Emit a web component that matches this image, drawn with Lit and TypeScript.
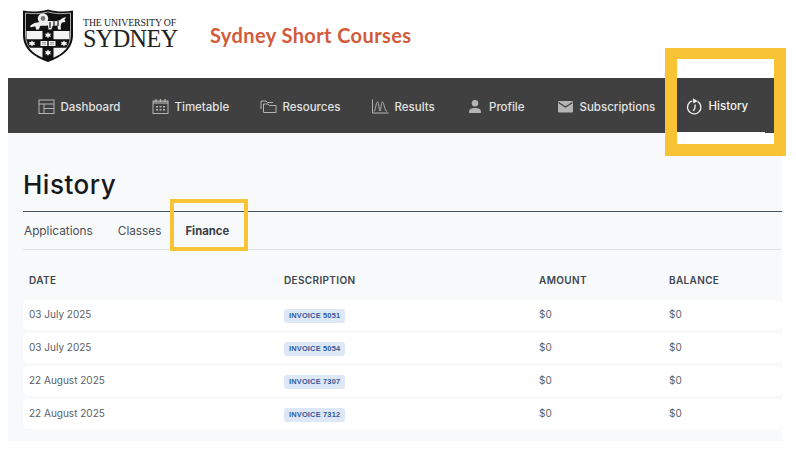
import { LitElement, html, css, svg } from 'lit';
import { customElement } from 'lit/decorators.js';

const NAV_ICONS: Record<string, unknown> = {
  dashboard: svg`<rect x="1" y="2" width="15" height="13.500" fill="none" stroke="currentColor" stroke-width="1"/><path d="M1 6h15M6 6v9.500M6 10.500h10" fill="none" stroke="currentColor" stroke-width="1"/>`,
  timetable: svg`<rect x="1" y="3" width="15" height="12.500" fill="none" stroke="currentColor" stroke-width="1"/><path d="M1 3h15v3H1z" fill="currentColor" opacity=".55"/><path d="M4 1v3M8.500 1v3M13 1v3" stroke="currentColor" stroke-width="1.300"/><path d="M4 8h2v1.500H4zM7.500 8h2v1.500h-2zM11 8h2v1.500h-2zM4 11h2v1.500H4zM7.500 11h2v1.500h-2zM11 11h2v1.500h-2z" fill="currentColor"/>`,
  resources: svg`<path d="M1 11V3h5l1.500 1.500H13" fill="none" stroke="currentColor" stroke-width="1"/><path d="M3.500 14.500V6h4.500l1.500 1.500h6.500v7z" fill="none" stroke="currentColor" stroke-width="1"/>`,
  results: svg`<path d="M.5 1.500v13.500h16" fill="none" stroke="currentColor" stroke-width="1"/><path d="M2 13.500C3.500 13 4 4 5.500 4S7 13 8 13 9 4 10.500 4s2 9 4.500 9.500" fill="none" stroke="currentColor" stroke-width="1"/>`,
  profile: svg`<circle cx="8.500" cy="5" r="3" fill="currentColor"/><path d="M3 14v-1.500c0-2 2.500-3 5.500-3s5.500 1 5.500 3V14z" fill="currentColor"/>`,
  subscriptions: svg`<rect x="1" y="3" width="15" height="11.500" rx="1" fill="currentColor"/><path d="M1.500 4.500l7 4.500 7-4.500" fill="none" stroke="#404040" stroke-width="1.200"/>`,
  history: svg`<path d="M6.300 2.800A6.700 6.700 0 1 0 11.500 3.400" fill="none" stroke="currentColor" stroke-width="1.300"/><path d="M7 .2l4.600 2.900-4.200 2.300z" fill="currentColor"/><path d="M9.300 6.500l-.6 4.200-1.500 2.200" fill="none" stroke="currentColor" stroke-width="1.300"/>`,
};

const NAV = [
  { id: 'dashboard', label: 'Dashboard' },
  { id: 'timetable', label: 'Timetable' },
  { id: 'resources', label: 'Resources' },
  { id: 'results', label: 'Results' },
  { id: 'profile', label: 'Profile' },
  { id: 'subscriptions', label: 'Subscriptions' },
  { id: 'history', label: 'History', active: true },
];

const ROWS = [
  { date: '03 July 2025', invoice: 'INVOICE 5051' },
  { date: '03 July 2025', invoice: 'INVOICE 5054' },
  { date: '22 August 2025', invoice: 'INVOICE 7307' },
  { date: '22 August 2025', invoice: 'INVOICE 7312' },
];

@customElement('app-root')
export class AppRoot extends LitElement {
  static styles = css`
    :host {
      display: block;
      position: relative;
      height: 475px;
      overflow: hidden;
      background: #fff;
      font-family: 'Inter', 'Open Sans', sans-serif;
    }

    .header {
      display: flex;
      align-items: flex-start;
      height: 78px;
      padding-left: 23px;
      box-sizing: border-box;
    }
    .shield { width: 50px; height: 53px; flex: none; margin-top: 9px; }
    .wordmark {
      display: flex;
      flex-direction: column;
      width: 96px;
      margin-left: 10px;
      margin-top: 17px;
      color: #222;
      font-family: 'Liberation Serif', serif;
    }
    .wordmark .small { font-size: 9.800px; line-height: 11px; white-space: nowrap; letter-spacing: -.1px; }
    .wordmark .big { font-size: 24.200px; line-height: 22px; letter-spacing: -.6px; }
    .site-title {
      margin-left: 31px;
      margin-top: 23px;
      color: #d25b3c;
      font-family: 'Lato', sans-serif;
      font-weight: 700;
      font-size: 20px;
      line-height: 24px;
      letter-spacing: .4px;
    }

    .nav {
      display: grid;
      grid-template-columns: 114px 108px 112px 97px 88px 119px 89px;
      height: 55px;
      margin: 0 14px 0 8px;
      padding-left: 30px;
      background: #404040;
      color: #e2e2e2;
      font-size: 11.500px;
      font-weight: 500;
    }
    .nav-item {
      display: flex;
      align-items: center;
      gap: 5.500px;
      box-sizing: border-box;
      padding-top: 2px;
      white-space: nowrap;
    }
    .nav-item svg { width: 17px; height: 17px; flex: none; color: #b4b4b4; }
    .nav-item.profile svg { width: 12px; height: 15px; margin-right: 2.500px; }
    .nav-item.active { padding-left: 10px; color: #f4f4f4; border-bottom: 1.500px solid #fff; }
    .nav-item.active svg { color: #f4f4f4; }

    .panel {
      height: 308px;
      margin: 0 14px 0 8px;
      padding-left: 15px;
      background: #f8f9fb;
    }
    h1 {
      margin: 0;
      padding-top: 37px;
      height: 41px;
      color: #16181c;
      font-size: 26px;
      line-height: 30px;
      font-weight: 500;
      letter-spacing: .5px;
    }
    .tabs {
      display: flex;
      align-items: center;
      height: 37px;
      border-top: 1px solid #46525e;
      border-bottom: 1px solid #dfe2e6;
      font-size: 11.800px;
      color: #4a4f57;
    }
    .tab { margin-left: 1px; margin-right: 24px; }
    .tab.active { margin-left: 0; font-size: 11.300px; font-weight: 700; color: #3a3f46; }

    .cols {
      display: grid;
      grid-template-columns: 255px 255px 130px 1fr;
      padding-left: 6px;
    }
    .thead {
      height: 50px;
      padding-top: 10px;
      box-sizing: border-box;
      align-items: center;
      color: #3c4650;
      font-size: 10px;
      font-weight: 600;
      letter-spacing: .35px;
    }
    .rows { display: flex; flex-direction: column; gap: 3px; }
    .row {
      height: 30px;
      align-items: center;
      background: #fff;
      border-radius: 5px;
      color: #5a5f66;
      font-size: 10px;
      padding-bottom: 3px;
      box-sizing: border-box;
    }
    .badge {
      display: inline-block;
      position: relative;
      top: 2px;
      padding: 0 5px;
      height: 14px;
      line-height: 14px;
      border-radius: 3px;
      background: #dde7f5;
      color: #33599a;
      font-family: 'Liberation Sans', sans-serif;
      font-size: 7.400px;
      font-weight: 700;
      letter-spacing: .2px;
    }

    .mark { position: absolute; box-sizing: border-box; border-style: solid; border-color: #f8c435; }
    .mark-nav { left: 665px; top: 48px; width: 121px; height: 108px; border-width: 11px 12px 12px 12px; }
    .mark-nav::after {
      content: '';
      position: absolute;
      left: 0;
      right: 0;
      bottom: 0;
      height: 11px;
      background: #fff;
    }
    .mark-tab { left: 170px; top: 199px; width: 78px; height: 52px; border-width: 4px; }
  `;

  private renderShield() {
    return html`<svg class="shield" viewBox="0 0 50 53">
      <path d="M0 1.500C8 3 16 3 25 .5c9 2.500 17 2.500 25 1V26c0 14-11 22-25 27C11 48 0 40 0 26z" fill="#111"/>
      <path d="M2.500 4c7 1 15 1 22.500-1 7.500 2 15.500 2 22.500 1v22c0 12.500-9.500 20-22.500 24.500C12 46 2.500 38.500 2.500 26z" fill="none" stroke="#eee" stroke-width=".7"/>
      <path d="M3.500 22h43v8.500H3.900c-.2-1-.4-2-.4-4z" fill="#f4f4f4"/>
      <path d="M6 38.500h38c-4 5.500-10 9-19 11.500C16 47.500 10 44 6 38.500z" fill="#f4f4f4"/>
      <path d="M19.500 21h11v30h-11z" fill="#111"/>
      <path d="M3.700 30.500h42.600c-.6 3-1.500 5.500-2.800 8h-37c-1.300-2.500-2.200-5-2.800-8z" fill="#111"/>
      <!-- lion -->
      <path d="M7 17c3-3 6-3.500 10-4l8-1c4 0 8 .5 11-.5 2-.7 5-4 7-3l-1.500 2 1 2.500-3.500.5c-2 2.500-1 5-1 7h-3l-.5-4-5 .5-1 3.500h-3l-.5-4c-3 .5-5 0-8 .5l-1 3.500h-3l-.5-3c-2 0-4 1-5 .5z" fill="#eee"/>
      <circle cx="20" cy="9.500" r="5.200" fill="#eee"/>
      <circle cx="20" cy="9.500" r="2.400" fill="#777"/>
      <path d="M27 13v6M31 12.500v6M35 12v5" stroke="#111" stroke-width="1.200"/>
      <!-- stars -->
      <path d="M25 23l1 1.800 2-.3-.9 1.700.9 1.700-2-.3-1 1.800-1-1.800-2 .3.900-1.700-.9-1.700 2 .3z" fill="#f4f4f4"/>
      <path d="M25 40.500l1 1.800 2-.3-.9 1.700.9 1.700-2-.3-1 1.800-1-1.800-2 .3.900-1.700-.9-1.700 2 .3z" fill="#f4f4f4"/>
      <path d="M9 31.500l1.100 1.700 2-.4-.8 1.700.8 1.700-2-.4-1.100 1.700-1.100-1.700-2 .4.800-1.700-.8-1.700 2 .4zM41 31.500l1.100 1.700 2-.4-.8 1.700.8 1.700-2-.4-1.100 1.700-1.100-1.700-2 .4.800-1.700-.8-1.700 2 .4z" fill="#f4f4f4"/>
      <!-- book -->
      <path d="M17.500 32h6.800v5h-6.800zM25.700 32h6.800v5h-6.800z" fill="#f4f4f4"/>
      <path d="M19 33.500h4M19 35.200h4M27 33.500h4M27 35.200h4" stroke="#444" stroke-width=".5"/>
    </svg>`;
  }

  render() {
    return html`
      <div class="header">
        ${this.renderShield()}
        <div class="wordmark">
          <span class="small">THE UNIVERSITY OF</span>
          <span class="big">SYDNEY</span>
        </div>
        <div class="site-title">Sydney Short Courses</div>
      </div>

      <nav class="nav">
        ${NAV.map(
          (n) => html`<div class="nav-item ${n.id} ${n.active ? 'active' : ''}">
            <svg viewBox=${n.id === 'profile' ? '3 1 11 14' : '0 0 17 17'}>${NAV_ICONS[n.id]}</svg>
            <span>${n.label}</span>
          </div>`
        )}
      </nav>

      <main class="panel">
        <h1>History</h1>
        <div class="tabs">
          <span class="tab">Applications</span>
          <span class="tab">Classes</span>
          <span class="tab active">Finance</span>
        </div>
        <div class="cols thead">
          <span>DATE</span><span>DESCRIPTION</span><span>AMOUNT</span><span>BALANCE</span>
        </div>
        <div class="rows">
          ${ROWS.map(
            (r) => html`<div class="cols row">
              <span>${r.date}</span>
              <span><span class="badge">${r.invoice}</span></span>
              <span>$0</span>
              <span>$0</span>
            </div>`
          )}
        </div>
      </main>

      <div class="mark mark-nav"></div>
      <div class="mark mark-tab"></div>
    `;
  }
}
